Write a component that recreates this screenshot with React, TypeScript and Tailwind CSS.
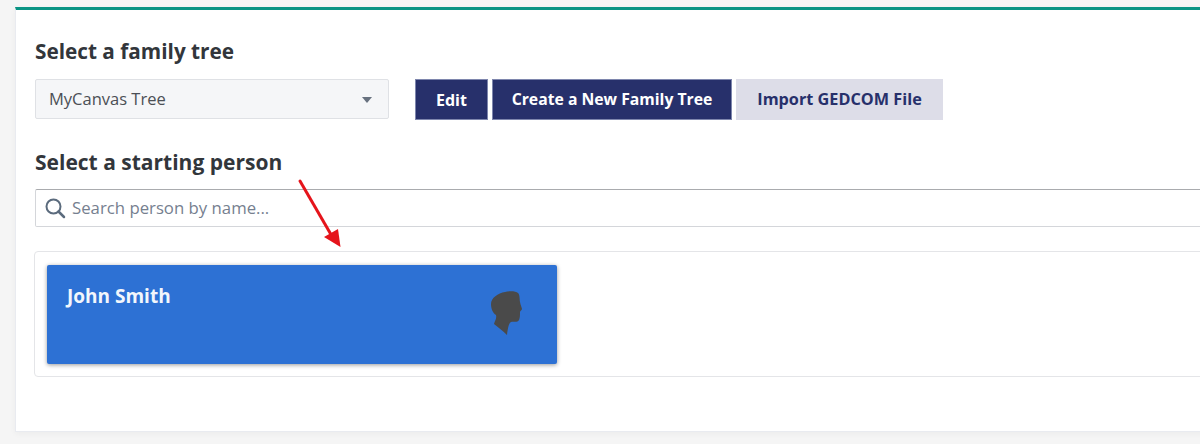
// App.tsx
// Family tree picker: select a tree, then a starting person

import React from 'react';

function SilhouetteIcon() {
  return (
    <svg width="36" height="46" viewBox="0 0 36 46" className="text-[#4a4a4a]" aria-hidden="true">
      <path
        fill="currentColor"
        d="M15 1 C19 0 26 0 28 2 C30 4 29.500 8 30 11 C30.500 14 32 17 32 18 C32 19 30 20 30 21 C30 24 30 27 29 29 C27 32 24 30 21 31 C19 32 18 36 17 44 C13 40 8 36 4 33 C4.500 30 7 28 6 24 C3 22 1 18 1 13 C1 7 8 2 15 1 Z"
      />
    </svg>
  );
}

function SearchIcon() {
  return (
    <svg width="22" height="22" viewBox="0 0 22 22" fill="none" stroke="#5b6b7d" aria-hidden="true">
      <circle cx="9.500" cy="9.500" r="7" strokeWidth="2" />
      <path d="M14.500 14.500 L20 20" strokeWidth="2.500" strokeLinecap="round" />
    </svg>
  );
}

export default function App() {
  return (
    <div className="relative h-[444px] w-[1200px] overflow-hidden bg-[#f5f5f5] pl-[15px] pt-[7px] font-['Open_Sans','Liberation_Sans',sans-serif]">
      {/* Card */}
      <div className="h-[425px] w-[1300px] border-t-[3px] border-l border-b border-[#e9ebf0] border-t-[#0a9484] bg-white pl-[19px] shadow-[0_2px_6px_rgba(0,0,0,0.04)]">
        <h2 className="mt-[30px] h-[24px] text-[20.750px] font-bold leading-[22px] text-[#32363b]">Select a family tree</h2>

        <div className="mt-[15px] flex items-start">
          {/* Select */}
          <div className="flex h-[40px] w-[354px] items-center justify-between rounded-[2px] border border-[#dfe1e5] bg-[#f5f6f8] pl-[13px] pr-[16px] text-[16.500px] text-[#4b4f55]">
            <span>MyCanvas Tree</span>
            <span className="mt-[2px] h-0 w-0 border-x-[5.500px] border-t-[6px] border-x-transparent border-t-[#67717f]" />
          </div>

          {/* Actions */}
          <button className="ml-[26px] h-[41px] w-[73px] border border-[#7e86ad] bg-[#27306b] text-[16px] font-bold text-white">Edit</button>
          <button className="ml-[4px] h-[41px] w-[240px] border border-[#7e86ad] bg-[#27306b] text-[15.750px] font-bold text-white">Create a New Family Tree</button>
          <button className="ml-[4px] h-[41px] w-[207px] bg-[#dddde8] text-[16.250px] font-bold text-[#27306b]">Import GEDCOM File</button>
        </div>

        <h2 className="mt-[31px] h-[24px] text-[21px] font-bold leading-[22px] text-[#32363b]">Select a starting person</h2>

        {/* Search */}
        <div className="mt-[14px] flex h-[38px] items-center gap-[6px] rounded-[2px] border border-[#d4d6da] border-t-[#a9abae] bg-white pl-[8px] text-[16.750px] text-[#76808f]">
          <SearchIcon />
          <span>Search person by name...</span>
        </div>

        {/* People */}
        <div className="-ml-px mt-[24px] h-[126px] rounded-[4px] border border-[#e4e5e8] pl-[12px] pt-[13px]">
          <div className="flex h-[99px] w-[510px] items-start justify-between rounded-[2px] bg-[#2d71d4] pl-[20px] pr-[31px] shadow-[0_1px_4px_rgba(0,0,0,0.4)]">
            <span className="mt-[20px] text-[19px] font-bold leading-[22px] text-[#f2f6fc]">John Smith</span>
            <div className="mt-[26px]">
              <SilhouetteIcon />
            </div>
          </div>
        </div>
      </div>

      {/* Annotation arrow */}
      <svg className="absolute left-[295px] top-[176px]" width="52" height="76" viewBox="0 0 52 76" aria-hidden="true">
        <path d="M5 5 L38 62" stroke="#e5141b" strokeWidth="3" strokeLinecap="round" />
        <path d="M45.500 71 L43 53 L29 61 Z" fill="#e5141b" />
      </svg>
    </div>
  );
}
